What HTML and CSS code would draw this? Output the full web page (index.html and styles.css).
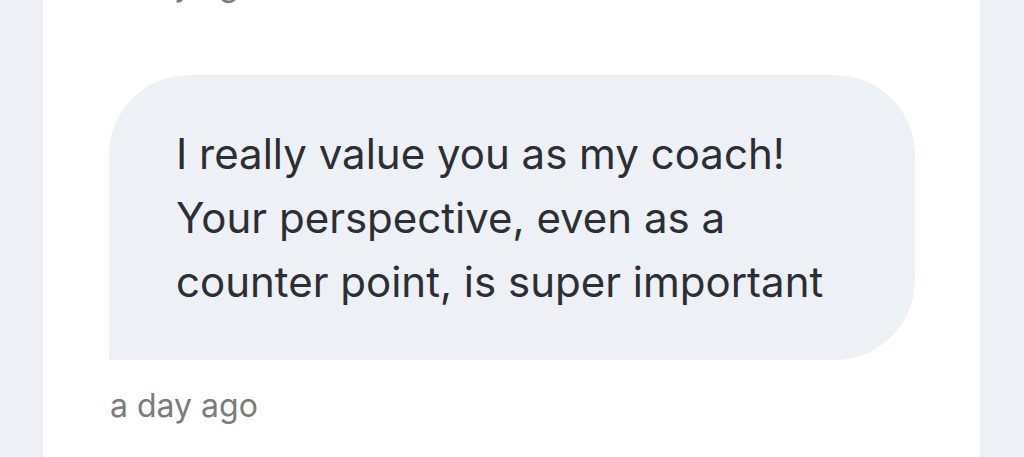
FILE: index.html
```html
<!DOCTYPE html>
<html>
<head>
<meta charset="utf-8">
<link rel="stylesheet" href="styles.css">
</head>
<body>
<div class="panel">
  <div class="time time-prev">a day ago</div>
  <div class="bubble">
    <p class="msg">I really value you as my coach!<br>Your perspective, even as a<br>counter point, is super important</p>
  </div>
  <div class="time">a day ago</div>
</div>
</body>
</html>
```
FILE: styles.css
```css
html, body {
  margin: 0;
  padding: 0;
  height: 100%;
}
body {
  background: #eef0f5;
  font-family: Inter, "Noto Sans", sans-serif;
  overflow: hidden;
}
.panel {
  background: #ffffff;
  margin: 0 44px 0 43px;
  height: 100%;
  padding: 0 65px 0 66px;
  box-sizing: border-box;
  display: flex;
  flex-direction: column;
  align-items: flex-start;
}
.time {
  color: #7b7b7b;
  font-size: 32px;
  line-height: 36px;
  margin-top: 28px;
  margin-left: 1px;
}
.time-prev {
  margin-top: -33px;
}
.bubble {
  align-self: stretch;
  background: #edf0f5;
  border-radius: 80px 80px 80px 0;
  margin-top: 72px;
  padding: 47px 40px 46px 67px;
}
.msg {
  margin: 0;
  color: #2b2e33;
  font-size: 42px;
  line-height: 64px;
}
```
